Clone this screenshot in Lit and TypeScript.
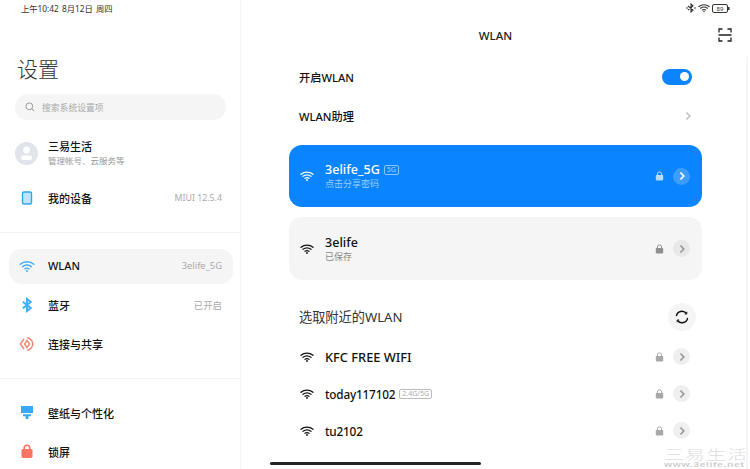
import { LitElement, html, css, svg } from 'lit'
import { customElement } from 'lit/decorators.js'

const wifi = (color: string, size = 14) => html`<svg width=${size} height=${size} viewBox="0 0 14 14" fill="none" stroke=${color} stroke-linecap="round">
	<path d="M1 5.300C4.400 2.500 9.600 2.500 13 5.300" stroke-width="1.300" />
	<path d="M3 7.300C5.300 5.600 8.700 5.600 11 7.300" stroke-width="1.300" />
	<path d="M5 9.300C6.200 8.500 7.800 8.500 9 9.300" stroke-width="1.200" />
	<circle cx="7" cy="11" r="0.900" fill=${color} stroke="none" />
</svg>`

const lock = (color: string) => html`<svg width="9" height="10" viewBox="0 0 9 10">
	<path d="M2.400 4.500V3a2.100 2.100 0 0 1 4.200 0v1.500" fill="none" stroke=${color} stroke-width="1" />
	<rect x="0.800" y="4" width="7.400" height="5.400" rx="0.800" fill=${color} />
</svg>`

const chevron = (color: string) => html`<svg width="8" height="10" viewBox="0 0 8 10" fill="none">
	<path d="M2.400 1.500 5.800 5 2.400 8.500" stroke=${color} stroke-width="1.700" />
</svg>`

const menuIcons: Record<string, unknown> = {
	device: svg`<rect x="4.500" y="3" width="9" height="12" rx="1.500" fill="#bfe4fb" stroke="#2fa5f3" stroke-width="1.400" />`,
	wlan: svg`<g fill="none" stroke="#3eaefb" stroke-linecap="round"><path d="M2.200 7.200C6 4 12 4 15.800 7.200" stroke-width="1.500"/><path d="M4.600 9.600C7 7.600 11 7.600 13.400 9.600" stroke-width="1.500"/><path d="M7 11.900C8.200 11 9.800 11 11 11.900" stroke-width="1.400"/></g><circle cx="9" cy="14" r="1" fill="#3eaefb"/>`,
	bt: svg`<path d="M4.800 5.700 12.800 11.900 9 15V3l3.800 3.100L4.800 12.300" fill="none" stroke="#3eaefb" stroke-width="1.900" />`,
	share: svg`<g fill="none" stroke="#f2806d" stroke-width="1.400"><path d="M6 3.800 2.400 9 6 14.200"/><path d="M9 2.600c3 .6 5.800 3.200 5.800 6.400S12 14.800 9 15.400"/><path d="M9 5.400 11.500 9 9 12.600 6.600 9z"/></g>`,
	wallpaper: svg`<path d="M3 2h12v7H3z" fill="#38a9f8" /><path d="M5 10.200h8v2h-2.600V15H7.600v-2.800H5z" fill="#38a9f8" />`,
	lockscreen: svg`<path d="M6.200 7V5a2.800 2.800 0 0 1 5.600 0v2" fill="none" stroke="#fb7463" stroke-width="1.600" /><rect x="3.500" y="6" width="11" height="9" rx="1.400" fill="#fb7463" />`,
}

const menuIcon = (name: string) => html`<svg class="menu-icon" width="18" height="18" viewBox="0 0 18 18">${menuIcons[name]}</svg>`

@customElement('app-root')
export class AppRoot extends LitElement {
	static styles = css`
		:host {
			display: flex;
			width: 750px;
			height: 469px;
			overflow: hidden;
			position: relative;
			background: #fff;
			color: #111;
			font-family: 'Noto Sans', 'Noto Sans CJK SC', sans-serif;
		}

		.sidebar {
			width: 241px;
			height: 469px;
			flex: none;
			box-sizing: border-box;
			border-right: 1px solid #f3f3f3;
			overflow: hidden;
		}

		.clock {
			height: 16px;
			padding-left: 21px;
			font-size: 8.300px;
			line-height: 17px;
			color: #333;
			word-spacing: 1px;
		}

		.heading {
			margin: 36px 0 0 17px;
			height: 42px;
			font-size: 21px;
			line-height: 32px;
			font-weight: 300;
			color: #333;
			font-family: 'Noto Sans CJK SC', sans-serif;
		}

		.search {
			display: flex;
			align-items: center;
			gap: 7px;
			height: 26px;
			margin: 0 14px 0 15px;
			padding-left: 10px;
			border-radius: 13px;
			background: #f5f5f5;
			font-size: 8.800px;
			color: #aaa;
		}

		.account {
			display: flex;
			align-items: center;
			height: 32px;
			margin: 17px 0 0 15px;
			gap: 10px;
		}

		.avatar {
			width: 23px;
			height: 23px;
			flex: none;
		}

		.account-name {
			font-size: 11px;
			line-height: 15px;
			font-weight: 500;
		}

		.account-sub {
			font-size: 8.500px;
			line-height: 13px;
			color: #999;
		}

		.menu-row {
			display: flex;
			align-items: center;
			box-sizing: border-box;
			height: 35px;
			margin: 0 7px 0 9px;
			padding: 0 11px 2px 9px;
			border-radius: 13px;
			font-size: 11px;
			font-weight: 500;
		}

		.menu-row.active {
			background: #f5f5f5;
		}

		.menu-icon {
			flex: none;
			margin-right: 12px;
		}

		.menu-label {
			flex: 1;
		}

		.menu-value {
			font-size: 9.400px;
			font-weight: 400;
			color: #aaa;
		}

		.device .menu-value {
			font-size: 8.800px;
		}

		.device {
			margin-top: 12px;
		}

		.rule {
			height: 1px;
			background: #f3f3f3;
		}

		.rule-a {
			margin: 16px 0;
		}

		.gap-row {
			margin-top: 4px;
		}

		.rule-b {
			margin: 16px 0 17px;
		}

		.main {
			flex: 1;
			min-width: 0;
			position: relative;
		}

		.topbar {
			display: flex;
			justify-content: flex-end;
			align-items: center;
			gap: 2px;
			height: 16px;
			padding-right: 20px;
		}

		.titlebar {
			display: grid;
			grid-template-columns: 1fr auto 1fr;
			align-items: center;
			height: 38px;
			padding: 0 18px;
			font-size: 11.500px;
			font-weight: 500;
			color: #222;
		}

		.titlebar svg {
			justify-self: end;
		}

		.content {
			margin: 0 48px;
		}

		.plain-row {
			display: flex;
			align-items: center;
			justify-content: space-between;
			height: 39px;
			padding: 0 10px;
			font-size: 11.200px;
			font-weight: 500;
		}

		.opening-row {
			margin-top: 3px;
		}

		.toggle {
			width: 30px;
			height: 16px;
			border-radius: 8px;
			background: #0d84ff;
			display: flex;
			justify-content: flex-end;
			align-items: center;
			padding-right: 3px;
			box-sizing: border-box;
		}

		.toggle i {
			width: 9px;
			height: 9px;
			border-radius: 50%;
			background: #fff;
		}

		.card {
			display: flex;
			align-items: center;
			height: 63px;
			border-radius: 13px;
			padding: 0 12px 0 11px;
			margin-top: 10px;
			background: #f5f5f5;
		}

		.card.connected {
			height: 62px;
			margin-top: 10px;
			background: #0a84ff;
			color: #fff;
		}

		.net-icon {
			flex: none;
			width: 14px;
			margin-right: 11px;
			display: flex;
		}

		.net-text {
			flex: 1;
			min-width: 0;
		}

		.net-name {
			display: flex;
			align-items: center;
			gap: 4px;
			font-size: 12.600px;
			line-height: 16px;
			font-weight: 500;
		}

		.net-sub {
			font-size: 9px;
			line-height: 12px;
			color: #8a8a8a;
		}

		.connected .net-sub {
			color: #9dcdff;
		}

		.tag {
			font-size: 7px;
			font-weight: 400;
			line-height: 8px;
			padding: 0 2px;
			border: 1px solid #bbb;
			border-radius: 2px;
			color: #aaa;
			letter-spacing: 0;
		}

		.connected .tag {
			border-color: #8cc4ff;
			color: #a9d3ff;
		}

		.go {
			width: 17px;
			height: 17px;
			flex: none;
			margin-left: 9px;
			border-radius: 50%;
			background: #e8e8e8;
			display: flex;
			align-items: center;
			justify-content: center;
		}

		.connected .go {
			background: #3d9dff;
		}

		.section {
			display: flex;
			align-items: center;
			justify-content: space-between;
			height: 37px;
			margin: 18px 0 3px;
			padding: 0 6px 0 10px;
			font-size: 13.200px;
			color: #333;
		}

		.refresh {
			width: 28px;
			height: 28px;
			border-radius: 50%;
			background: #f5f5f5;
			display: flex;
			align-items: center;
			justify-content: center;
		}

		.nearby {
			display: flex;
			align-items: center;
			height: 37px;
			padding: 0 12px 0 11px;
		}

		.nearby .net-name {
			font-size: 11.800px;
			letter-spacing: -0.200px;
		}

		.nearby.caps .net-name {
			font-size: 12.800px;
			letter-spacing: 0;
		}

		.nearby .go {
			background: #efefef;
		}

		.scroll-track {
			position: absolute;
			top: 57px;
			right: 2px;
			bottom: 0;
			width: 2px;
			background: #f5f5f5;
		}

		.home-bar {
			position: absolute;
			left: 270px;
			top: 462px;
			width: 211px;
			height: 3px;
			background: #222;
			border-radius: 2px;
		}

		.mark {
			position: absolute;
			left: 664px;
			top: 446px;
			width: 86px;
			color: #dcdcdc;
			font-family: 'Noto Sans CJK SC', sans-serif;
		}

		.mark-title {
			font-size: 13px;
			line-height: 15px;
			letter-spacing: 1.100px;
			font-weight: 300;
			white-space: nowrap;
			transform: scaleX(1.500);
			transform-origin: left center;
		}

		.mark-url {
			font-family: 'Liberation Sans', sans-serif;
			font-size: 7.500px;
			line-height: 8px;
			font-weight: 700;
			letter-spacing: 0.400px;
			white-space: nowrap;
			color: #d0d0d0;
			transform: scaleX(1.400);
			transform-origin: left center;
		}
	`

	network(name: string, tag?: string, caps = false) {
		return html`<div class="nearby ${caps ? 'caps' : ''}">
			<span class="net-icon">${wifi('#111')}</span>
			<div class="net-text">
				<div class="net-name">${name}${tag ? html`<span class="tag">${tag}</span>` : ''}</div>
			</div>
			${lock('#a8a8a8')}
			<span class="go">${chevron('#999')}</span>
		</div>`
	}

	render() {
		return html`
			<aside class="sidebar">
				<div class="clock">上午10:42 8月12日 周四</div>
				<div class="heading">设置</div>
				<div class="search">
					<svg width="10" height="10" viewBox="0 0 10 10" fill="none" stroke="#999" stroke-width="1">
						<circle cx="4.300" cy="4.300" r="3.400" /><path d="M6.800 6.800 9.200 9.200" />
					</svg>
					搜索系统设置项
				</div>
				<div class="account">
					<svg class="avatar" viewBox="0 0 23 23">
						<circle cx="11.500" cy="11.500" r="11.500" fill="#e1e4ea" />
						<circle cx="11.500" cy="8" r="3.400" fill="#fff" />
						<rect x="6" y="13.500" width="11" height="4.500" rx="2.200" fill="#fff" />
					</svg>
					<div>
						<div class="account-name">三易生活</div>
						<div class="account-sub">管理帐号、云服务等</div>
					</div>
				</div>
				<div class="menu-row device">
					${menuIcon('device')}<span class="menu-label">我的设备</span><span class="menu-value">MIUI 12.5.4</span>
				</div>
				<div class="rule rule-a"></div>
				<div class="menu-row active">
					${menuIcon('wlan')}<span class="menu-label">WLAN</span><span class="menu-value">3elife_5G</span>
				</div>
				<div class="menu-row gap-row">
					${menuIcon('bt')}<span class="menu-label">蓝牙</span><span class="menu-value">已开启</span>
				</div>
				<div class="menu-row gap-row">
					${menuIcon('share')}<span class="menu-label">连接与共享</span>
				</div>
				<div class="rule rule-b"></div>
				<div class="menu-row">
					${menuIcon('wallpaper')}<span class="menu-label">壁纸与个性化</span>
				</div>
				<div class="menu-row gap-row">
					${menuIcon('lockscreen')}<span class="menu-label">锁屏</span>
				</div>
			</aside>

			<main class="main">
				<div class="topbar">
					<svg width="10" height="10" viewBox="0 0 10 10" fill="#333" stroke="none">
						<path d="M2 3 7 7 5 9V1l2 2-5 4" fill="none" stroke="#333" stroke-width="1.100" />
						<circle cx="1" cy="5" r="0.800" /><circle cx="9" cy="5" r="0.800" />
					</svg>
					${wifi('#333', 12)}
					<svg width="18" height="9" viewBox="0 0 18 9" fill="none">
						<rect x="0.500" y="0.500" width="15" height="8" rx="1.500" stroke="#333" />
						<rect x="16" y="3" width="1.500" height="3" fill="#333" />
						<text x="8" y="6.800" font-size="6" text-anchor="middle" fill="#333">89</text>
					</svg>
				</div>
				<div class="titlebar">
					<span></span>
					<span>WLAN</span>
					<svg width="14" height="14" viewBox="0 0 14 14" fill="none" stroke="#222" stroke-width="1.300">
						<path d="M1 4.500V1h3.500M9.500 1H13v3.500M1 9.500V13h3.500M9.500 13H13V9.500M0.500 7h13" />
					</svg>
				</div>
				<div class="content">
					<div class="plain-row opening-row">
						<span>开启WLAN</span>
						<span class="toggle"><i></i></span>
					</div>
					<div class="plain-row">
						<span>WLAN助理</span>
						${chevron('#c4c4c4')}
					</div>
					<div class="card connected">
						<span class="net-icon">${wifi('#fff')}</span>
						<div class="net-text">
							<div class="net-name">3elife_5G<span class="tag">5G</span></div>
							<div class="net-sub">点击分享密码</div>
						</div>
						${lock('#b5dbff')}
						<span class="go">${chevron('#fff')}</span>
					</div>
					<div class="card">
						<span class="net-icon">${wifi('#111')}</span>
						<div class="net-text">
							<div class="net-name">3elife</div>
							<div class="net-sub">已保存</div>
						</div>
						${lock('#8f8f8f')}
						<span class="go">${chevron('#999')}</span>
					</div>
					<div class="section">
						<span>选取附近的WLAN</span>
						<span class="refresh">
							<svg width="14" height="14" viewBox="0 0 14 14" fill="none" stroke="#111" stroke-width="1.300">
								<path d="M1.400 6.200A5.600 5.600 0 0 1 11.400 3.500M12.600 7.800A5.600 5.600 0 0 1 2.600 10.500" />
								<path d="M11.800 1.800v2.200H9.800M2.200 12.200V10h2" stroke-width="1" />
							</svg>
						</span>
					</div>
					${this.network('KFC FREE WIFI', undefined, true)}
					${this.network('today117102', '2.4G/5G')}
					${this.network('tu2102')}
				</div>
				<div class="scroll-track"></div>
			</main>

			<div class="home-bar"></div>
			<div class="mark">
				<div class="mark-title">三易生活</div>
				<div class="mark-url">www.3elife.net</div>
			</div>
		`
	}
}
